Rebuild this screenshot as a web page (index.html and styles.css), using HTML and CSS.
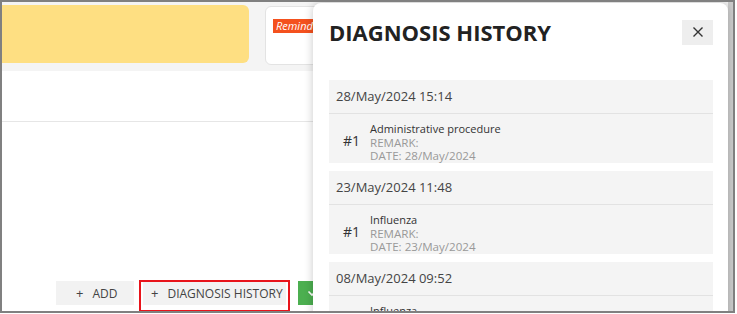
FILE: index.html
```html
<!DOCTYPE html>
<html>
<head>
<meta charset="utf-8">
<link rel="stylesheet" href="styles.css">
</head>
<body>
<div class="frame">
  <div class="main">
    <div class="top-band">
      <div class="yellow-card"></div>
      <div class="reminder-card"><span class="badge">Reminder</span></div>
    </div>
    <div class="section"></div>
    <div class="spacer"></div>
    <div class="actions">
      <button class="btn btn-add"><span class="plus">+</span>ADD</button>
      <span class="highlight-wrap">
        <button class="btn btn-hist"><span class="plus">+</span>DIAGNOSIS HISTORY</button>
        <span class="annot"></span>
      </span>
      <button class="btn btn-green">
        <svg width="10" height="7" viewBox="0 0 10 7"><path d="M1.5 1.5 L5 5 L8.5 1.5" fill="none" stroke="#fff" stroke-width="1.6"/></svg>
      </button>
    </div>
  </div>
  <div class="scrollbar"></div>

  <div class="panel">
    <div class="panel-head">
      <h1 class="panel-title">DIAGNOSIS HISTORY</h1>
      <button class="close-btn" aria-label="close">
        <svg width="12" height="12" viewBox="0 0 12 12"><path d="M1.5 1.5 L10.5 10.5 M10.5 1.5 L1.5 10.5" stroke="#333" stroke-width="1.4" fill="none"/></svg>
      </button>
    </div>
    <div class="history">
      <div class="group">
        <div class="group-head">28/May/2024 15:14</div>
        <div class="item">
          <div class="num">#1</div>
          <div class="info">
            <div class="name">Administrative procedure</div>
            <div class="meta">REMARK:</div>
            <div class="meta">DATE: 28/May/2024</div>
          </div>
        </div>
      </div>
      <div class="group">
        <div class="group-head">23/May/2024 11:48</div>
        <div class="item">
          <div class="num">#1</div>
          <div class="info">
            <div class="name">Influenza</div>
            <div class="meta">REMARK:</div>
            <div class="meta">DATE: 23/May/2024</div>
          </div>
        </div>
      </div>
      <div class="group">
        <div class="group-head">08/May/2024 09:52</div>
        <div class="item">
          <div class="num">#1</div>
          <div class="info">
            <div class="name">Influenza</div>
            <div class="meta">REMARK:</div>
            <div class="meta">DATE: 08/May/2024</div>
          </div>
        </div>
      </div>
    </div>
  </div>
</div>
</body>
</html>
```

FILE: styles.css
```css
* { box-sizing: border-box; }
html, body { margin: 0; padding: 0; background: #fff; }
body { font-family: "Open Sans", "Liberation Sans", sans-serif; }

.frame {
  position: relative;
  width: 735px;
  height: 313px;
  border: 2px solid #808080;
  display: flex;
  overflow: hidden;
  background: #fff;
}

.main {
  flex: 1;
  display: flex;
  flex-direction: column;
  min-width: 0;
}

.scrollbar {
  width: 5px;
  background: #cdcdcd;
}

.top-band {
  height: 69px;
  background: #f4f4f4;
  display: flex;
  align-items: flex-start;
  padding-top: 3px;
}

.yellow-card {
  width: 247px;
  height: 58px;
  background: #fedf82;
  border-radius: 0 6px 6px 0;
}

.reminder-card {
  margin-left: 16px;
  margin-top: 1px;
  width: 120px;
  height: 59px;
  background: #fff;
  border: 1px solid #e3e3e3;
  border-radius: 6px;
  padding: 6px 0 0 7px;
}

.badge {
  display: inline-block;
  background: #f4511e;
  color: #fff;
  font-style: italic;
  font-size: 11px;
  line-height: 14px;
  padding: 0 4px 0 3px;
}

.section {
  height: 51px;
  border-bottom: 1px solid #e6e6e6;
}

.spacer { flex: 1; }

.actions {
  display: flex;
  align-items: center;
  padding-left: 54px;
  margin-bottom: 6px;
  height: 24px;
}

.btn {
  border: none;
  height: 24px;
  font-family: "Open Sans", "Liberation Sans", sans-serif;
  font-size: 12px;
  color: #444;
  background: #f2f2f2;
  display: flex;
  align-items: center;
  padding: 0;
  cursor: pointer;
}

.plus { margin-right: 9px; font-size: 13px; }

.btn-add { width: 78px; padding-left: 20px; }

.highlight-wrap {
  position: relative;
  margin-left: 9px;
  display: flex;
}

.btn-hist { width: 143px; padding-left: 8px; }

.annot {
  position: absolute;
  left: -4px;
  top: -1px;
  right: -4px;
  bottom: -7px;
  border: 2px solid #e8141b;
}

.btn-green {
  margin-left: 12px;
  width: 30px;
  background: #4caf50;
  padding-left: 9px;
}

.panel {
  position: absolute;
  left: 311px;
  top: 1px;
  width: 415px;
  bottom: -40px;
  background: #fff;
  border-radius: 8px;
  box-shadow: 0 0 10px rgba(0, 0, 0, 0.22);
  padding: 14px 15px 0 16px;
  overflow: hidden;
}

.panel-head {
  display: flex;
  justify-content: space-between;
  align-items: center;
}

.panel-title {
  margin: 0;
  font-size: 22px;
  line-height: 30px;
  font-weight: 700;
  color: #222;
}

.close-btn {
  width: 31px;
  height: 25px;
  border: none;
  background: #eeeeee;
  display: flex;
  align-items: center;
  justify-content: center;
  padding: 0;
}

.history { margin-top: 33px; }

.group {
  background: #f4f4f4;
  margin-bottom: 8px;
}

.group-head {
  height: 34px;
  line-height: 33px;
  padding-left: 7px;
  font-size: 13px;
  color: #444;
  border-bottom: 1px solid #e2e2e2;
}

.item {
  height: 49px;
  overflow: hidden;
  display: flex;
  align-items: center;
  padding-left: 14px;
}

.num {
  font-size: 14px;
  color: #333;
  width: 27px;
  margin-top: 4px;
}

.info {
  font-size: 11px;
  line-height: 13.5px;
  padding-top: 14px;
  align-self: flex-start;
  margin-top: -6px;
}

.name { color: #333; }
.meta { color: #999; font-size: 11.6px; }
```
